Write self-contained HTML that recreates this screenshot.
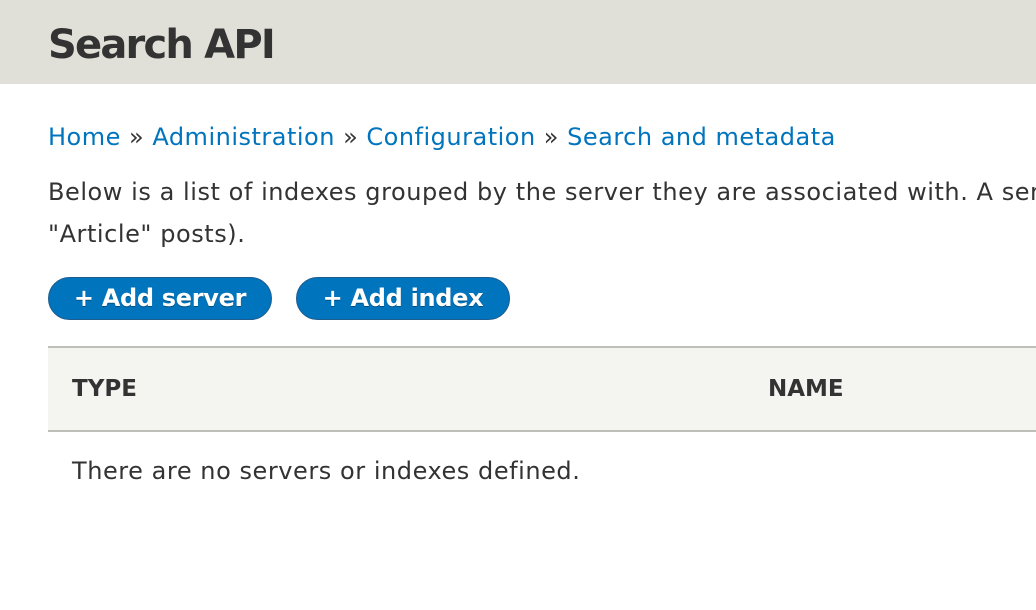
<!DOCTYPE html>
<html><head><meta charset="utf-8"><style>
body{margin:0;width:1036px;height:610px;overflow:hidden;background:#fff;font-family:"DejaVu Sans","Liberation Sans",sans-serif;color:#333}
.hdr{position:absolute;left:0;top:0;width:1036px;height:84px;background:#e0e0d8}
.hdr h1{position:absolute;left:48px;top:22px;margin:0;font-size:40px;font-weight:bold;color:#333;white-space:nowrap;letter-spacing:-1.8px}
.bc{position:absolute;left:48px;top:123px;font-size:24px;white-space:nowrap;color:#333;letter-spacing:0.5px}
.bc a{color:#0074bd;text-decoration:none}
.p{position:absolute;left:48px;font-size:24px;white-space:nowrap;letter-spacing:0.55px}
.btn{position:absolute;top:277px;height:41px;border:1px solid #1e5c90;border-radius:22px;background:#0074bd;color:#fff;font-weight:bold;font-size:24px;line-height:41px;text-align:center;box-sizing:content-box;white-space:nowrap;text-shadow:0 1px 0 #004f80;letter-spacing:-0.3px}
.th{position:absolute;left:48px;top:346px;width:988px;height:82px;background:#f4f4f0;border-top:2px solid #bfbfba;border-bottom:2px solid #bfbfba}
.th span{position:absolute;top:28px;font-size:23px;font-weight:bold;color:#333}
</style></head><body>
<div class="hdr"><h1>Search API</h1></div>
<div class="bc"><a>Home</a> » <a>Administration</a> » <a>Configuration</a> » <a>Search and metadata</a></div>
<div class="p" style="top:178px">Below is a list of indexes grouped by the server they are associated with. A server</div>
<div class="p" style="top:220px">"Article" posts).</div>
<div class="btn" style="left:48px;width:222px">+ Add server</div>
<div class="btn" style="left:296px;width:212px">+ Add index</div>
<div class="th"><span style="left:24px">TYPE</span><span style="left:720px">NAME</span></div>
<div class="p" style="left:72px;top:457px">There are no servers or indexes defined.</div>
</body></html>
